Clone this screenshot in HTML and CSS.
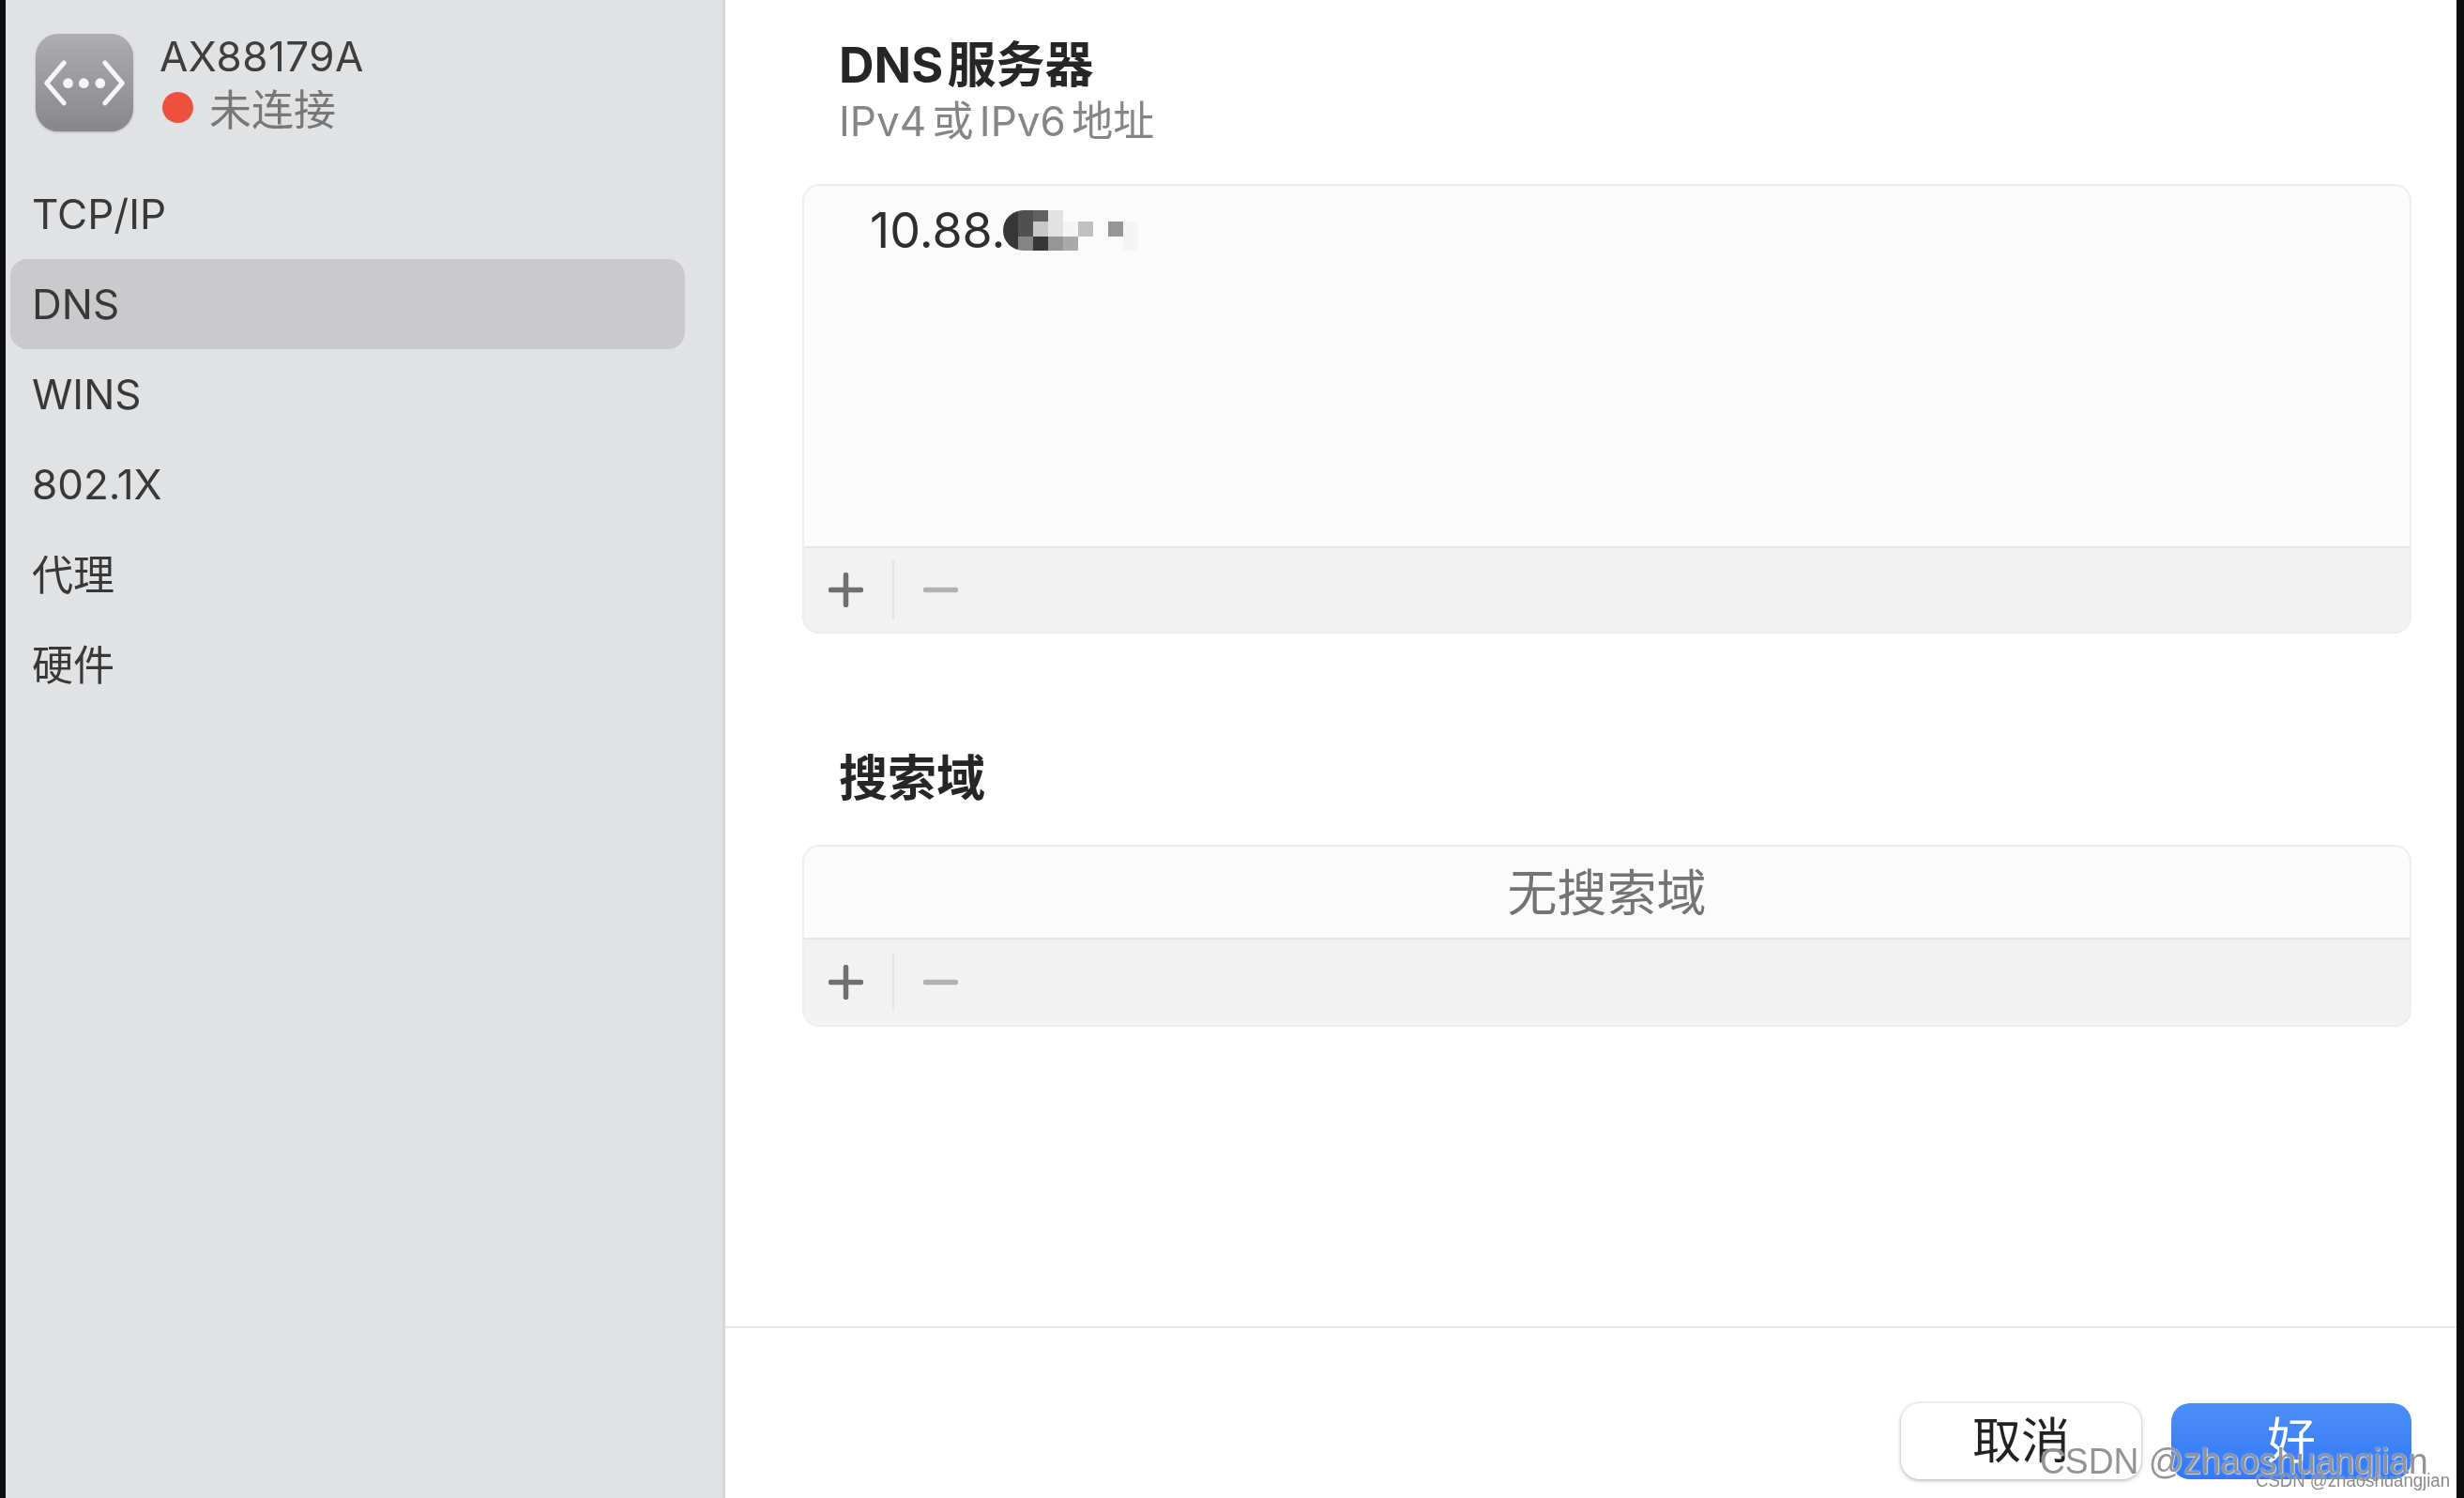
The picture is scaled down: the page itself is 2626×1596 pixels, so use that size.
FILE: index.html
```html
<!DOCTYPE html>
<html lang="zh-CN">
<head>
  <meta charset="UTF-8" />
  <title>DNS</title>
  <link rel="stylesheet" href="styles.css">
</head>
<body>
  <div class="window">
    <aside class="sidebar">
      <div class="device">
        <svg class="device-icon" viewBox="0 0 310 310">
          <defs>
            <linearGradient id="iconFill" x1="0" y1="0" x2="0" y2="1">
              <stop offset="0" stop-color="#aeaeb2"/>
              <stop offset="1" stop-color="#87878b"/>
            </linearGradient>
          </defs>
          <rect width="310" height="310" rx="72" fill="url(#iconFill)"/>
          <path d="M90 92 L35 157 L90 220 M220 92 L275 157 L220 220" fill="none" stroke="#f6f6f6" stroke-width="15" stroke-linecap="round" stroke-linejoin="round"/>
          <circle cx="103" cy="157" r="16" fill="#f6f6f6"/>
          <circle cx="153" cy="157" r="16" fill="#f6f6f6"/>
          <circle cx="205" cy="157" r="16" fill="#f6f6f6"/>
        </svg>
        <div class="device-info">
          <div class="device-name">AX88179A</div>
          <div class="device-status"><span class="dot"></span>未连接</div>
        </div>
      </div>
      <nav class="nav">
        <div class="nav-item">TCP/IP</div>
        <div class="nav-item active">DNS</div>
        <div class="nav-item">WINS</div>
        <div class="nav-item">802.1X</div>
        <div class="nav-item nav-cjk">代理</div>
        <div class="nav-item nav-cjk">硬件</div>
      </nav>
    </aside>

    <main class="main">
      <div class="content">
        <h2 class="title title-dns">DNS 服务器</h2>
        <div class="subtitle">IPv4 或 IPv6 地址</div>
        <section class="panel">
          <div class="list">
            <div class="address">
              <span>10.88.</span>
              <div class="mosaic">
                <i class="k3"></i><i class="k5"></i><i class="k6"></i><i class="ke"></i><i></i><i></i><i></i><i></i><i></i>
                <i class="k3"></i><i class="k5"></i><i class="kc"></i><i class="ke"></i><i class="kf"></i><i class="kb"></i><i></i><i class="k9"></i><i class="kf"></i>
                <i class="k3"></i><i class="k8"></i><i class="k3"></i><i class="k9"></i><i class="ka"></i><i></i><i></i><i></i><i class="kf"></i>
              </div>
            </div>
          </div>
          <div class="toolbar">
            <svg class="tool" viewBox="0 0 37 37"><path d="M2.5 18.5 H34.5 M18.5 2.5 V34.5" stroke="#707070" stroke-width="5.5" stroke-linecap="round"/></svg>
            <span class="tool-sep"></span>
            <svg class="tool" viewBox="0 0 37 37"><path d="M2.5 18.5 H34.5" stroke="#b2b2b2" stroke-width="5.5" stroke-linecap="round"/></svg>
          </div>
        </section>

        <h2 class="title title-search">搜索域</h2>
        <section class="panel">
          <div class="list list-empty">无搜索域</div>
          <div class="toolbar toolbar-low">
            <svg class="tool" viewBox="0 0 37 37"><path d="M2.5 18.5 H34.5 M18.5 2.5 V34.5" stroke="#707070" stroke-width="5.5" stroke-linecap="round"/></svg>
            <span class="tool-sep"></span>
            <svg class="tool" viewBox="0 0 37 37"><path d="M2.5 18.5 H34.5" stroke="#b2b2b2" stroke-width="5.5" stroke-linecap="round"/></svg>
          </div>
        </section>
      </div>
      <footer class="footer">
        <button class="btn" type="button">取消</button>
        <button class="btn btn-primary" type="button">好</button>
      </footer>
    </main>
  </div>
  <div class="mark mark-big">CSDN @zhaoshuangjian</div>
  <div class="mark mark-small">CSDN @zhaoshuangjian</div>
</body>
</html>
```

FILE: styles.css
```css
* {
  box-sizing: border-box;
}
html, body {
  margin: 0;
  height: 1596px;
  overflow: hidden;
  background: #0c0c0c;
}
body {
  position: relative;
  font-family: "Inter", "Noto Sans CJK SC", sans-serif;
  color: #333;
}
.window {
  display: flex;
  height: 1596px;
  margin: 0 8px 0 6px;
  filter: blur(0.6px);
}

/* sidebar */
.sidebar {
  width: 767px;
  flex-shrink: 0;
  background: #e1e2e4;
  border-right: 3px solid #d6d7d8;
}
.device {
  display: flex;
  height: 180px;
  padding: 36px 0 0 32px;
}
.device-icon {
  width: 104px;
  height: 104px;
  filter: drop-shadow(0 1px 1px rgba(0, 0, 0, 0.2));
}
.device-info {
  margin-left: 28px;
}
.device-name {
  height: 48px;
  font-size: 44px;
  line-height: 48px;
  letter-spacing: 0.5px;
  color: #3e3e3e;
}
.device-status {
  display: flex;
  align-items: center;
  height: 56px;
  margin-top: 2px;
  font-size: 45px;
  color: #777;
}
.dot {
  width: 33px;
  height: 33px;
  margin: 0 17px 0 3px;
  border-radius: 50%;
  background: #ee5040;
}
.nav-item {
  display: flex;
  align-items: center;
  width: 719px;
  height: 96px;
  margin-left: 5px;
  padding-left: 23px;
  border-radius: 18px;
  font-size: 44px;
  color: #383838;
}
.nav-item.active {
  background: #cacacc;
}
.nav-cjk {
  padding-bottom: 4px;
}

/* main area */
.main {
  display: flex;
  flex-direction: column;
  flex: 1;
  background: #fff;
}
.content {
  height: 1413px;
  padding: 46px 48px 0 82px;
}
.title {
  margin: 0 0 0 39px;
  font-size: 52px;
  line-height: 48px;
  font-weight: 700;
  color: #262626;
}
.title-dns {
  word-spacing: -8px;
}
.title-search {
  margin-top: 131px;
  margin-bottom: 46px;
}
.subtitle {
  height: 50px;
  margin: 10px 0 42px 39px;
  font-size: 44px;
  line-height: 50px;
  word-spacing: -6px;
  color: #858585;
}
.panel {
  border: 2px solid #eeeeee;
  border-radius: 18px;
  overflow: hidden;
  background: #fbfbfb;
}
.list {
  height: 384px;
  padding: 21px 0 0 70px;
}
.list-empty {
  display: flex;
  align-items: center;
  justify-content: center;
  height: 97px;
  padding: 0 0 5px;
  font-size: 53px;
  color: #747474;
}
.address {
  display: flex;
  align-items: center;
  height: 52px;
  font-size: 52px;
  color: #2e2e2e;
}
.mosaic {
  display: grid;
  grid-template-columns: repeat(9, 16px);
  grid-template-rows: 12px 16px 15px;
  margin-left: -3px;
  border-radius: 24px 0 0 24px;
  overflow: hidden;
}
.k3 { background: #363636; }
.k5 { background: #505050; }
.k6 { background: #606060; }
.k8 { background: #858585; }
.k9 { background: #969696; }
.ka { background: #aaaaaa; }
.kb { background: #c0c0c0; }
.kc { background: #c8c8c8; }
.ke { background: #e2e2e2; }
.kf { background: #f5f5f5; }
.toolbar {
  display: flex;
  align-items: center;
  height: 91px;
  padding-left: 26px;
  border-top: 2px solid #e6e6e6;
  background: #f3f3f3;
}
.toolbar-low {
  height: 93px;
}
.tool {
  width: 37px;
  height: 37px;
}
.tool-sep {
  width: 2px;
  height: 63px;
  margin: 0 31px 0 31px;
  background: #e6e6e6;
}

/* bottom buttons */
.footer {
  display: flex;
  justify-content: flex-end;
  gap: 32px;
  flex: 1;
  padding: 80px 48px 0 0;
  border-top: 2px solid #e6e6e6;
}
.btn {
  width: 256px;
  height: 81px;
  padding: 0;
  border: none;
  border-radius: 20px;
  background: #fff;
  box-shadow: 0 1px 4px rgba(0, 0, 0, 0.35);
  font-family: inherit;
  font-size: 52px;
  line-height: 78px;
  color: #222;
}
.btn-primary {
  background: linear-gradient(#4c8ef8, #3478f6);
  box-shadow: none;
  color: #fff;
}

/* watermark */
.mark {
  position: absolute;
  font-family: "Liberation Sans", sans-serif;
  white-space: nowrap;
  transform-origin: left center;
  filter: blur(0.5px);
}
.mark-big {
  left: 2174px;
  top: 1532px;
  font-size: 39px;
  line-height: 50px;
  color: rgba(135, 135, 135, 0.9);
  text-shadow: 0 0 2px rgba(255, 255, 255, 0.9), 1px 1px 1px rgba(255, 255, 255, 0.6);
  transform: scaleX(0.953);
}
.mark-small {
  left: 2404px;
  top: 1565px;
  font-size: 20px;
  line-height: 24px;
  color: rgba(125, 125, 125, 0.9);
  text-shadow: 0 0 2px rgba(255, 255, 255, 0.9);
  transform: scaleX(0.93);
}
```
